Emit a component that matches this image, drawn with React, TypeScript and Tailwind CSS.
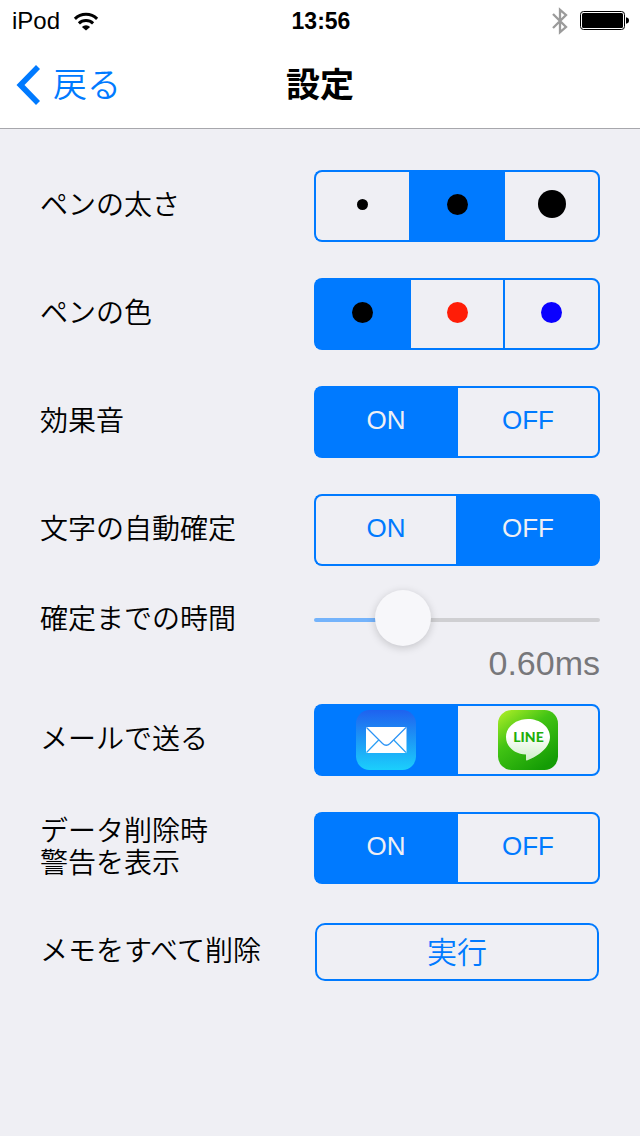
import { useState } from "react";
import type { ReactNode } from "react";

interface Option {
  value: string;
  label: string;
  content: ReactNode;
}

interface SegmentedProps {
  name: string;
  legend: string;
  options: Option[];
  initial: string;
}

const WifiIcon = () => (
  <svg width="26" height="19" viewBox="0 0 26 19" fill="none" aria-hidden="true">
    <path d="M1.900 6.900A15.800 15.800 0 0 1 24.100 6.900" stroke="#000" strokeWidth="3" />
    <path d="M5.900 11.300A10.200 10.200 0 0 1 20.100 11.300" stroke="#000" strokeWidth="3" />
    <path d="M13 18.600L8.900 14.900A5.800 5.800 0 0 1 17.100 14.900Z" fill="#000" />
  </svg>
);

const BluetoothIcon = () => (
  <svg width="16" height="28" viewBox="0 0 16 28" fill="none" aria-hidden="true">
    <path
      d="M1 7L14 20L8 25.200V2.800L14 8L1 21"
      stroke="#9b9b9b"
      strokeWidth="2.300"
    />
  </svg>
);

const BatteryIcon = () => (
  <svg width="50" height="20" viewBox="0 0 50 20" fill="none" aria-hidden="true">
    <rect x="0.5" y="0.5" width="44" height="18" rx="3" stroke="#000" />
    <rect x="2" y="2" width="41" height="15" rx="1.5" fill="#000" />
    <path d="M46 6.2Q49 6.8 49 9.5T46 12.8Z" fill="#000" />
  </svg>
);

const BackIcon = () => (
  <svg width="24" height="40" viewBox="0 0 24 40" aria-hidden="true">
    <path d="M20 0L24 4L8.500 20L24 36L20 40L0.500 20Z" fill="#007aff" />
  </svg>
);

const MailIcon = () => (
  <svg width="60" height="60" viewBox="0 0 60 60" fill="none" aria-hidden="true">
    <defs>
      <linearGradient id="mail" x1="0" y1="0" x2="0" y2="1">
        <stop offset="0" stopColor="#1f62ef" />
        <stop offset="1" stopColor="#1bcffc" />
      </linearGradient>
    </defs>
    <rect width="60" height="60" rx="13.5" fill="url(#mail)" />
    <rect x="10" y="17" width="40.5" height="26" rx="1" fill="#fff" />
    <path
      d="M10.5 17.5L26.5 33.5Q30.2 37 34 33.5L50 17.5"
      stroke="#2a93f6"
      strokeWidth="1.2"
    />
    <path d="M10.5 42.5L22.7 30M50 42.5L37.8 30" stroke="#2aa0f6" strokeWidth="1.2" />
  </svg>
);

const LineIcon = () => (
  <svg width="60" height="60" viewBox="0 0 60 60" aria-hidden="true">
    <defs>
      <linearGradient id="line" x1="0" y1="0" x2="0.7" y2="1">
        <stop offset="0" stopColor="#b4f028" />
        <stop offset="0.45" stopColor="#42c414" />
        <stop offset="1" stopColor="#149c05" />
      </linearGradient>
      <linearGradient id="bubble" x1="0" y1="0" x2="0" y2="1">
        <stop offset="0.4" stopColor="#fff" />
        <stop offset="1" stopColor="#cdeec6" />
      </linearGradient>
    </defs>
    <rect width="60" height="60" rx="13.5" fill="url(#line)" />
    <path
      d="M30 9C42 9 52 16.8 52 27C52 37 41 46 29 50.5C28.2 50.8 28 50.4 28 49.6V44.6C16.5 44 8 36.8 8 27C8 16.8 18 9 30 9Z"
      fill="url(#bubble)"
    />
    <text
      x="30.5"
      y="32"
      textAnchor="middle"
      fill="#1fae0b"
      fontFamily="Lato, sans-serif"
      fontWeight="900"
      fontSize="14"
    >
      LINE
    </text>
  </svg>
);

const penSizes: Option[] = [
  {
    value: "small",
    label: "細い",
    content: <span className="mb-1 size-[11px] rounded-full bg-black" />,
  },
  {
    value: "medium",
    label: "普通",
    content: <span className="mb-1 size-[21px] rounded-full bg-black" />,
  },
  {
    value: "large",
    label: "太い",
    content: <span className="mb-1 size-7 rounded-full bg-black" />,
  },
];

const penColors: Option[] = [
  {
    value: "black",
    label: "黒",
    content: <span className="mb-1 size-[21px] rounded-full bg-black" />,
  },
  {
    value: "red",
    label: "赤",
    content: <span className="mb-1 size-[21px] rounded-full bg-[#ff1d07]" />,
  },
  {
    value: "blue",
    label: "青",
    content: <span className="mb-1 size-[21px] rounded-full bg-[#0a00ff]" />,
  },
];

const onOff: Option[] = [
  { value: "on", label: "ON", content: <span className="mb-1">ON</span> },
  { value: "off", label: "OFF", content: <span className="mb-1">OFF</span> },
];

const senders: Option[] = [
  { value: "mail", label: "メール", content: <MailIcon /> },
  { value: "line", label: "LINE", content: <LineIcon /> },
];

const Segmented = ({ name, legend, options, initial }: SegmentedProps) => {
  const [selected, setSelected] = useState(initial);

  return (
    <div role="radiogroup" aria-label={legend} className="flex h-[72px]">
      {options.map((o) => (
        <label
          key={o.value}
          className="relative flex flex-1 cursor-pointer items-center justify-center border-y-2 border-l-2 border-[#007aff] text-[26px] text-[#007aff] first:rounded-l-lg last:rounded-r-lg last:border-r-2 has-checked:bg-[#007aff] has-checked:text-[#efeff4]"
        >
          <input
            type="radio"
            name={name}
            value={o.value}
            aria-label={o.label}
            checked={selected === o.value}
            onChange={() => setSelected(o.value)}
            className="absolute inset-0 cursor-pointer appearance-none"
          />
          {o.content}
        </label>
      ))}
    </div>
  );
};

const Row = ({ title, children }: { title: ReactNode; children: ReactNode }) => (
  <div className="grid min-h-[108px] grid-cols-[1fr_286px] items-center">
    <div className="text-[28px] leading-8 font-[350]">{title}</div>
    {children}
  </div>
);

const MIN = 0.1;
const MAX = 2;

const App = () => {
  const [delay, setDelay] = useState(0.6);
  const fill = 10 + ((delay - MIN) / (MAX - MIN)) * 80;

  return (
    <div className="min-h-screen bg-[#efeff4] font-['Liberation_Sans','Noto_Sans_CJK_JP',sans-serif] text-black">
      <header className="border-b border-[#a7a7ac] bg-white">
        {/* Status bar */}
        <div className="grid h-10 grid-cols-3 items-center pt-0.5 pr-[10px] pl-3">
          <div className="flex items-center gap-[13px] text-2xl">
            <span>iPod</span>
            <WifiIcon />
          </div>
          <div className="text-center text-[23px] font-bold">13:56</div>
          <div className="flex items-center justify-end gap-3">
            <BluetoothIcon />
            <BatteryIcon />
          </div>
        </div>

        {/* Navigation bar */}
        <nav className="grid h-22 grid-cols-3 items-center px-4 pt-0.5">
          <a
            href="#back"
            className="flex items-center gap-[13px] text-[34px] leading-10 font-[350] text-[#007aff]"
          >
            <BackIcon />
            戻る
          </a>
          <h1 className="text-center text-[34px] leading-10 font-bold">設定</h1>
        </nav>
      </header>

      <main className="px-10 pt-[23px]">
        <Row title="ペンの太さ">
          <Segmented
            name="size"
            legend="ペンの太さ"
            options={penSizes}
            initial="medium"
          />
        </Row>
        <Row title="ペンの色">
          <Segmented
            name="color"
            legend="ペンの色"
            options={penColors}
            initial="black"
          />
        </Row>
        <Row title="効果音">
          <Segmented name="sound" legend="効果音" options={onOff} initial="on" />
        </Row>
        <Row title="文字の自動確定">
          <Segmented
            name="auto"
            legend="文字の自動確定"
            options={onOff}
            initial="off"
          />
        </Row>

        {/* Delay slider with its current value */}
        <div className="pt-4">
          <div className="grid h-10 grid-cols-[1fr_286px] items-center">
            <label htmlFor="delay" className="text-[28px] leading-8 font-[350]">
              確定までの時間
            </label>
            <input
              id="delay"
              type="range"
              min={MIN}
              max={MAX}
              step={0.05}
              value={delay}
              onChange={(e) => setDelay(Number(e.target.value))}
              style={{
                backgroundImage: `linear-gradient(to right, #74b3fb ${fill}%, #cfcfd2 ${fill}%)`,
              }}
              className="h-1 w-full cursor-pointer appearance-none rounded-full [&::-webkit-slider-thumb]:-mt-1 [&::-webkit-slider-thumb]:size-14 [&::-webkit-slider-thumb]:appearance-none [&::-webkit-slider-thumb]:rounded-full [&::-webkit-slider-thumb]:bg-[#f7f7fa] [&::-webkit-slider-thumb]:shadow-[0_2px_8px_rgba(0,0,0,0.18)]"
            />
          </div>
          <output
            htmlFor="delay"
            className="block text-right text-[34px] leading-[46px] text-[#77777a]"
          >
            {delay.toFixed(2)}ms
          </output>
        </div>

        <Row title="メールで送る">
          <Segmented
            name="sender"
            legend="メールで送る"
            options={senders}
            initial="mail"
          />
        </Row>
        <Row
          title={
            <>
              データ削除時
              <br />
              警告を表示
            </>
          }
        >
          <Segmented
            name="confirm"
            legend="データ削除時警告を表示"
            options={onOff}
            initial="on"
          />
        </Row>

        <div className="grid min-h-[100px] grid-cols-[1fr_286px] items-center">
          <div id="clear" className="text-[28px] leading-8 font-[350]">
            メモをすべて削除
          </div>
          <button
            type="button"
            aria-describedby="clear"
            className="mx-px h-[58px] cursor-pointer rounded-[10px] border-2 border-[#007aff] text-[30px] font-[350] text-[#007aff]"
          >
            実行
          </button>
        </div>
      </main>
    </div>
  );
};

export default App;
